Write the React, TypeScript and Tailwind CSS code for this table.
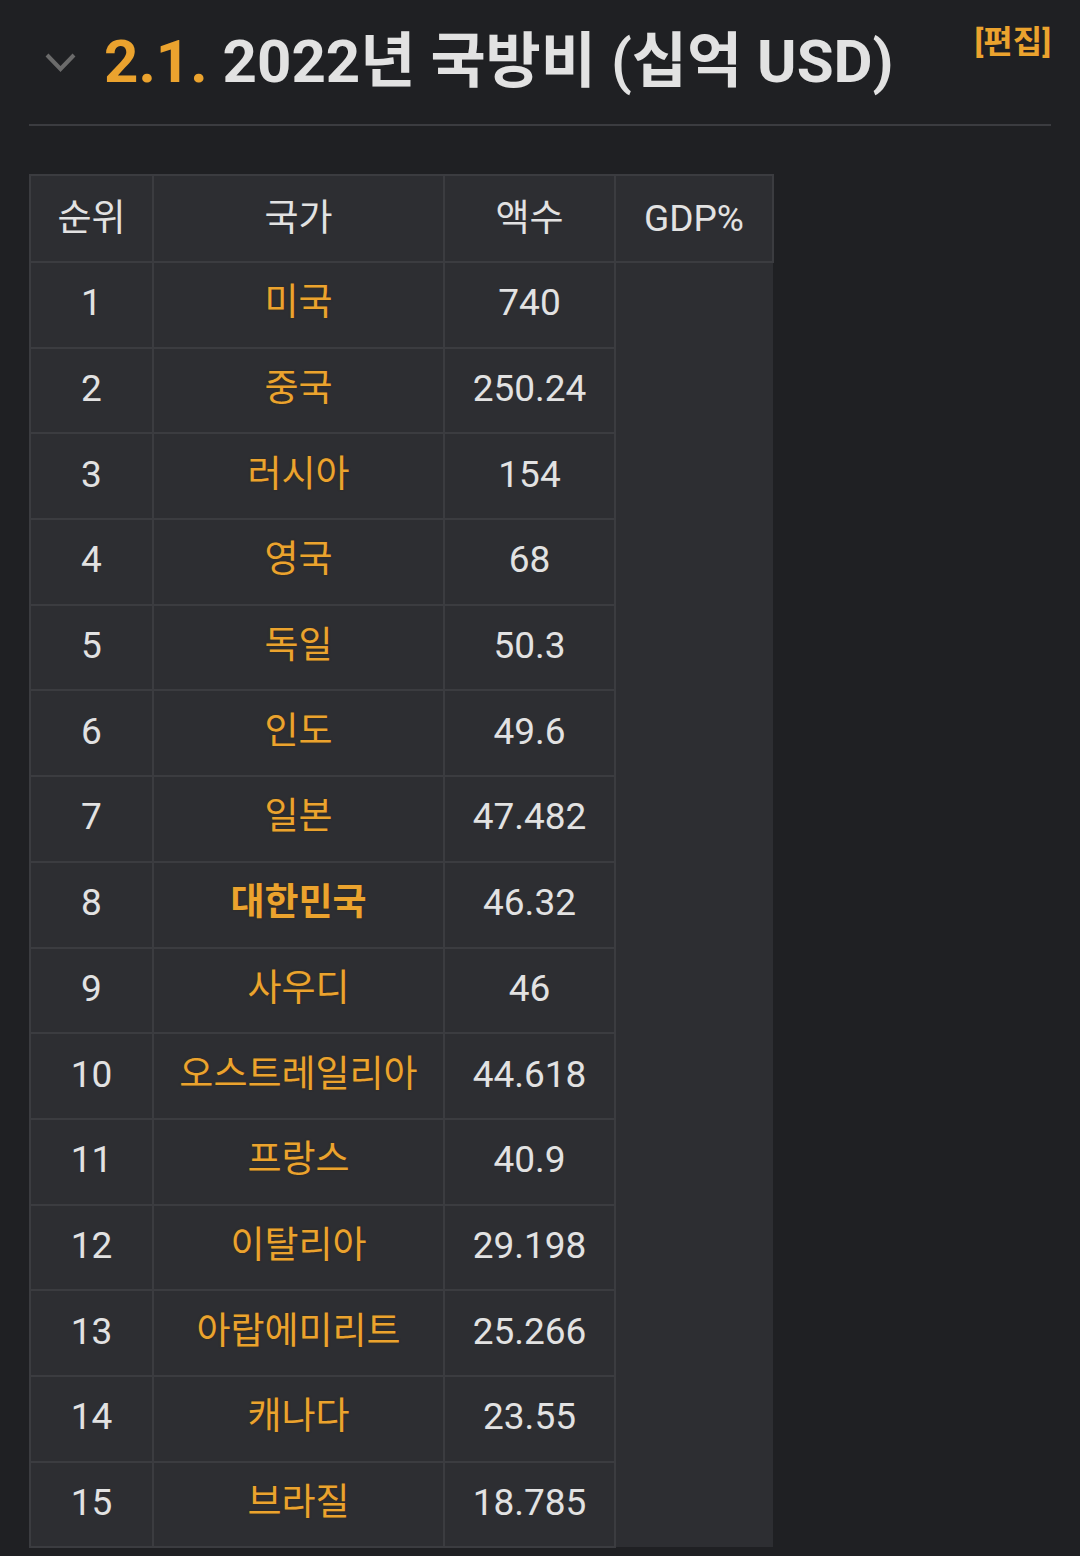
const rows: [string, string, string, boolean?][] = [
  ['1', '미국', '740'],
  ['2', '중국', '250.24'],
  ['3', '러시아', '154'],
  ['4', '영국', '68'],
  ['5', '독일', '50.3'],
  ['6', '인도', '49.6'],
  ['7', '일본', '47.482'],
  ['8', '대한민국', '46.32', true],
  ['9', '사우디', '46'],
  ['10', '오스트레일리아', '44.618'],
  ['11', '프랑스', '40.9'],
  ['12', '이탈리아', '29.198'],
  ['13', '아랍에미리트', '25.266'],
  ['14', '캐나다', '23.55'],
  ['15', '브라질', '18.785'],
];

const cell = 'border-2 border-[#3b3c40] bg-[#2d2e32] text-center align-middle p-0';

export default function App() {
  return (
    <div
      className="min-h-[1556px] w-[1080px] bg-[#1f2023] text-[#e2e2e2]"
      style={{ fontFamily: 'Roboto, "Noto Sans CJK KR", sans-serif' }}
    >
      <div className="px-[29px] pt-[22px]">
        <div className="flex items-start border-b-2 border-[#3b3c40] pb-[22px]">
          <svg className="mt-[31px] ml-[16px] mr-[28px] shrink-0" width="31" height="19" viewBox="0 0 31 19">
            <path d="M2 2 L15.5 16 L29 2" fill="none" stroke="#6b6b6b" strokeWidth="4" />
          </svg>
          <h2 className="text-[60px] font-bold leading-[80px]">
            <span className="text-[#eba32e]">2.1.</span>{' '}
            <span>2022</span>
            <span className="font-semibold">년 국방비 (십억</span> USD)
          </h2>
          <span className="ml-auto mt-[-2px] text-[32px] font-bold leading-[44px] text-[#eba32e]">[편집]</span>
        </div>

        <table className="mt-[48px] border-collapse text-[37px] leading-none">
          <thead>
            <tr className="h-[87px]">
              <th className={`${cell} w-[123px] font-normal`}>순위</th>
              <th className={`${cell} w-[291px] font-normal`}>국가</th>
              <th className={`${cell} w-[171px] font-normal`}>액수</th>
              <th className={`${cell} w-[158px] font-normal`}>GDP%</th>
            </tr>
          </thead>
          <tbody>
            {rows.map(([rank, name, amount, bold], i) => (
              <tr key={rank} className="h-[85.7px]">
                <td className={`${cell} pb-[4px]`}>{rank}</td>
                <td className={`${cell} pb-[4px]`}>
                  <span
                    className={`text-[#eba32e] ${bold ? 'font-bold' : ''}`}
                    style={{ textShadow: '0 0 2px rgba(60,40,0,0.6)' }}
                  >
                    {name}
                  </span>
                </td>
                <td className={`${cell} pb-[4px]`}>{amount}</td>
                {i === 0 && (
                  <td rowSpan={15} className="border-0 border-l-2 border-l-[#3b3c40] bg-[#2d2e32]" />
                )}
              </tr>
            ))}
          </tbody>
        </table>
      </div>
    </div>
  );
}
